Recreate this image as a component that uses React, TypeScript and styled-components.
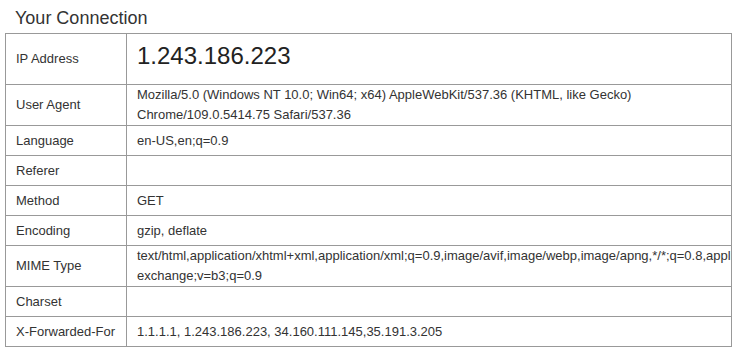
import React from "react";
import styled, { createGlobalStyle } from "styled-components";

const GlobalStyle = createGlobalStyle`
  html, body {
    margin: 0;
    padding: 0;
    background: #fff;
  }
  body {
    font-family: "Liberation Sans", Arial, sans-serif;
    color: #333;
  }
`;

const Wrapper = styled.section`
  width: 727px;
  padding: 8px 0 0 5px;
`;

const Title = styled.h2`
  margin: 0 0 4px 10px;
  font-size: 18px;
  font-weight: 400;
  line-height: 21px;
  color: #333;
`;

const Table = styled.table`
  width: 727px;
  table-layout: fixed;
  border-collapse: collapse;
  border: 1px solid #888;
  font-size: 13px;
  line-height: 20px;
`;

const Row = styled.tr<{ tall?: boolean }>`
  td {
    height: ${({ tall }) => (tall ? 40 : 29)}px;
  }
`;

const Label = styled.td`
  width: 100px;
  padding: 0 10px;
  border: 1px solid #999;
  vertical-align: middle;
  color: #333;
`;

const Value = styled.td`
  padding: 0 10px;
  border: 1px solid #999;
  vertical-align: middle;
  color: #333;
  overflow: hidden;
`;

const IpRow = styled.tr`
  td {
    height: 50px;
  }
`;

const IpValue = styled(Value)`
  font-size: 24px;
  line-height: 28px;
  color: #222;
  padding-bottom: 6px;
  height: 44px !important;
`;

interface IRow {
  label: string;
  value: string;
  tall?: boolean;
}

const rows: IRow[] = [
  {
    label: "User Agent",
    value:
      "Mozilla/5.0 (Windows NT 10.0; Win64; x64) AppleWebKit/537.36 (KHTML, like Gecko) Chrome/109.0.5414.75 Safari/537.36",
    tall: true,
  },
  { label: "Language", value: "en-US,en;q=0.9" },
  { label: "Referer", value: "" },
  { label: "Method", value: "GET" },
  { label: "Encoding", value: "gzip, deflate" },
  {
    label: "MIME Type",
    value:
      "text/html,application/xhtml+xml,application/xml;q=0.9,image/avif,image/webp,image/apng,*/*;q=0.8,application/signed-exchange;v=b3;q=0.9",
    tall: true,
  },
  { label: "Charset", value: "" },
  {
    label: "X-Forwarded-For",
    value: "1.1.1.1, 1.243.186.223, 34.160.111.145,35.191.3.205",
  },
];

const App: React.FC = () => {
  return (
    <>
      <GlobalStyle />
      <Wrapper>
        <Title>Your Connection</Title>
        <Table>
          <colgroup>
            <col style={{ width: 121 }} />
            <col />
          </colgroup>
          <tbody>
            <IpRow>
              <Label>IP Address</Label>
              <IpValue>1.243.186.223</IpValue>
            </IpRow>
            {rows.map((row) => (
              <Row key={row.label} tall={row.tall}>
                <Label>{row.label}</Label>
                <Value>{row.value}</Value>
              </Row>
            ))}
          </tbody>
        </Table>
      </Wrapper>
    </>
  );
};

export default App;
